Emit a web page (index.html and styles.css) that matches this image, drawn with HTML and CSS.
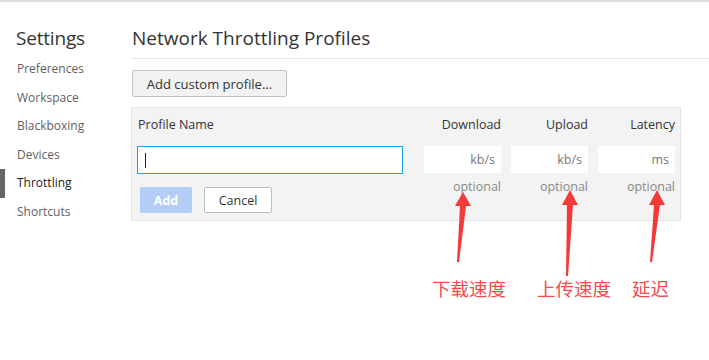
FILE: index.html
```html
<!DOCTYPE html>
<html>
<head>
<meta charset="utf-8">
<link rel="stylesheet" href="styles.css">
</head>
<body>
<div class="topline"></div>
<div class="app">
  <nav class="sidebar">
    <div class="title">Settings</div>
    <ul class="menu">
      <li>Preferences</li>
      <li>Workspace</li>
      <li>Blackboxing</li>
      <li>Devices</li>
      <li class="active">Throttling</li>
      <li>Shortcuts</li>
    </ul>
  </nav>
  <main class="content">
    <h1 class="heading">Network Throttling Profiles</h1>
    <button class="btn-add-custom">Add custom profile...</button>
    <div class="panel">
      <div class="col-head left">Profile Name</div>
      <div class="col-head">Download</div>
      <div class="col-head">Upload</div>
      <div class="col-head">Latency</div>
      <div class="name-input"><span class="caret"></span></div>
      <div class="num-input">kb/s</div>
      <div class="num-input">kb/s</div>
      <div class="num-input">ms</div>
      <div class="actions">
        <button class="btn btn-primary">Add</button>
        <button class="btn btn-cancel">Cancel</button>
      </div>
      <div class="hint">optional</div>
      <div class="hint">optional</div>
      <div class="hint">optional</div>
    </div>
  </main>
</div>
<svg class="arrows" width="709" height="360" viewBox="0 0 709 360">
  <polygon points="463,192 471,206 466,206 459,262 457,262 460,206 455,206" />
  <polygon points="570,190 578,205 573,205 568,276 566,276 567,205 562,205" />
  <polygon points="657,190 665,205 660,205 652,262 650,262 654,205 649,205" />
</svg>
<div class="label l1">下载速度</div>
<div class="label l2">上传速度</div>
<div class="label l3">延迟</div>
</body>
</html>
```
FILE: styles.css
```css
* { box-sizing: border-box; }
html, body { margin: 0; padding: 0; background: #fff; }
body {
  font-family: "Open Sans", "Noto Sans", sans-serif;
  color: #333;
  width: 709px;
  height: 360px;
  overflow: hidden;
  position: relative;
}
.topline { height: 2px; background: #dcdcdc; }
.app { display: flex; }
.sidebar { width: 131px; flex: none; }
.title {
  padding-left: 16px;
  margin-top: 23px;
  font-size: 19px;
  line-height: 26px;
  color: #333;
  letter-spacing: -0.2px;
}
.menu { list-style: none; margin: 4px 0 0; padding: 0; }
.menu li {
  height: 28.5px;
  line-height: 28.5px;
  padding-left: 17px;
  font-size: 12px;
  color: #5f5f5f;
  position: relative;
}
.menu li.active { color: #222; }
.menu li.active::before {
  content: "";
  position: absolute;
  left: 0; top: 0;
  width: 5px; height: 29px;
  background: #666;
}
.content { flex: 1; padding-top: 23px; }
.heading {
  margin: 0 0 0 1px;
  font-weight: normal;
  font-size: 19px;
  line-height: 26px;
  color: #333;
  padding-bottom: 7px;
  border-bottom: 1px solid #e6e6e6;
}
.btn-add-custom {
  margin: 11px 0 0 1px;
  display: block;
  width: 155px;
  height: 27px;
  font-family: inherit;
  font-size: 13px;
  color: #333;
  background: #f2f2f2;
  border: 1px solid #c4c4c4;
  border-radius: 2px;
  padding: 0;
}
.panel {
  margin-top: 10px;
  width: 550px;
  background: #f3f3f3;
  border: 1px solid #e2e2e2;
  padding: 6px 5px 7px 5px;
  display: grid;
  grid-template-columns: 277px 77px 77px 77px;
  column-gap: 10px;
  align-items: start;
}
.panel > :nth-child(4n+1) { margin-right: 11px; }
.col-head {
  font-size: 12.5px;
  line-height: 22px;
  text-align: right;
  color: #333;
}
.col-head.left { text-align: left; padding-left: 1px; }
.name-input {
  margin-top: 10px;
  height: 28px;
  background: #fff;
  border: 1px solid #1ea0e6;
  position: relative;
}
.caret {
  position: absolute;
  left: 7px; top: 6px;
  width: 1px; height: 15px;
  background: #222;
}
.num-input {
  margin-top: 10px;
  height: 27px;
  background: #fff;
  font-size: 12.5px;
  line-height: 27px;
  text-align: right;
  padding-right: 6px;
  color: #777;
}
.actions { display: flex; gap: 12px; margin-top: 13px; padding-left: 3px; }
.btn {
  height: 26px;
  font-family: inherit;
  font-size: 12.5px;
  border-radius: 2px;
  padding: 0;
}
.btn-primary {
  width: 52px;
  background: #b3cdf6;
  color: #fff;
  font-weight: bold;
  border: 0;
}
.btn-cancel {
  width: 68px;
  background: #fff;
  border: 1px solid #bcbcbc;
  color: #333;
}
.hint {
  margin-top: 5px;
  font-size: 12.5px;
  line-height: 16px;
  text-align: right;
  color: #8a8a8a;
}
.arrows { position: absolute; left: 0; top: 0; }
.arrows polygon { fill: #f23a3a; }
.label {
  position: absolute;
  top: 275px;
  font-family: "Noto Sans CJK SC", sans-serif;
  font-size: 18.5px;
  line-height: 26px;
  color: #f54b4b;
}
.l1 { left: 432px; }
.l2 { left: 537px; }
.l3 { left: 632px; }
```
